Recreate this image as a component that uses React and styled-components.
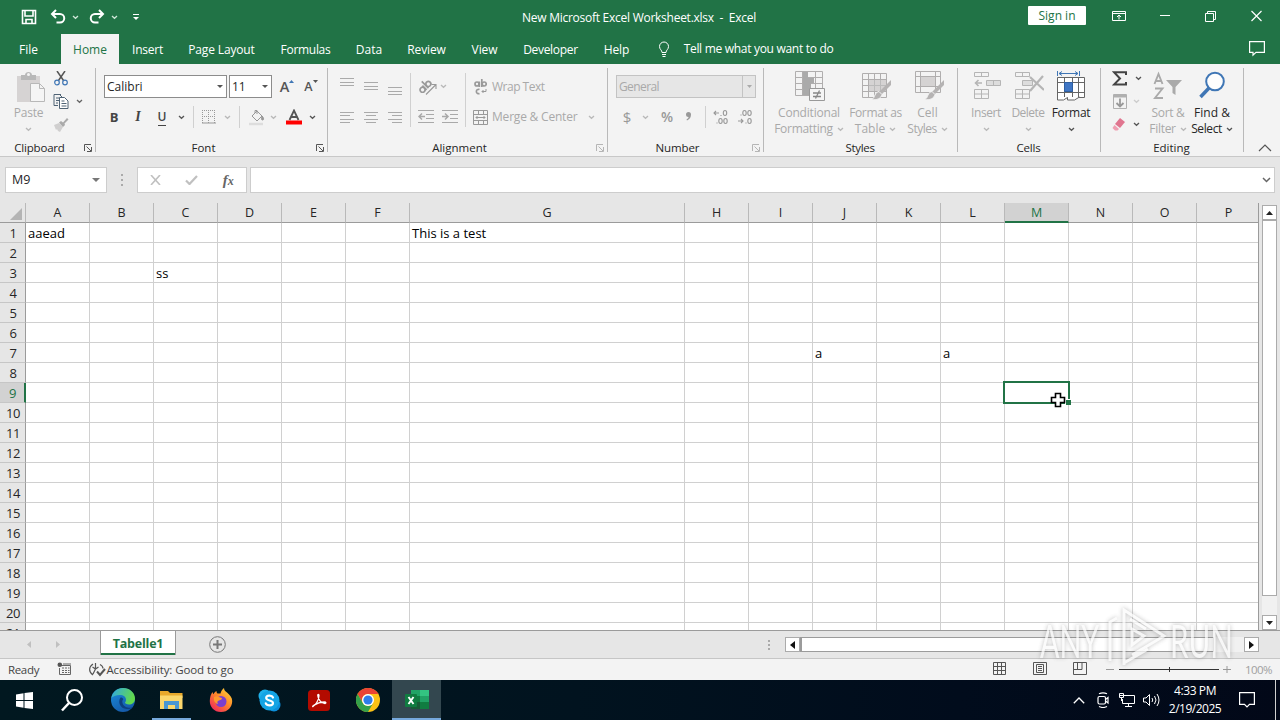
import React from 'react';
import styled, { createGlobalStyle } from 'styled-components';

const GlobalStyle = createGlobalStyle`
  * { box-sizing: border-box; }
  body { margin: 0; overflow: hidden; font-family: "Open Sans", "Noto Sans", sans-serif; font-size: 12px; color: #262626; }
  svg { display: block; flex: none; }
`;

const Screen = styled.div`
  width: 1280px; height: 720px; display: flex; flex-direction: column; position: relative; overflow: hidden; background: #e6e6e6;
`;
const Text = styled.span`
  font-size: ${(p) => p.$size || 12}px;
  letter-spacing: ${(p) => p.$ls || 0}px;
  color: ${(p) => p.$color || 'inherit'};
  font-weight: ${(p) => p.$weight || 400};
  line-height: 16px;
  white-space: pre;
`;
const Space = styled.div`flex: none; width: ${(p) => p.$w || 0}px;`;
const Slot = styled.div`
  flex: none; width: ${(p) => p.$w}px; height: ${(p) => (p.$h ? p.$h + 'px' : '100%')};
  display: flex; align-items: center; justify-content: center;
`;

/* title bar and tabs */
const Header = styled.header`height: 64px; flex: none; background: #217346; color: #fff; display: flex; flex-direction: column;`;
const TitleBar = styled.div`height: 34px; display: flex; align-items: center; padding-left: 17px;`;
const QuickAccess = styled.div`width: 505px; height: 34px; display: flex; align-items: center;`;
const Title = styled.div`width: 506px; height: 34px; display: flex; align-items: center; padding-top: 1px;`;
const SignIn = styled.div`width: 58px; height: 19px; margin-top: -3px; background: #fff; border-radius: 1px; color: #217346; display: flex; align-items: center; justify-content: center;`;
const TabRow = styled.nav`height: 30px; display: flex; align-items: center;`;
const Tab = styled.div`
  height: 30px; width: ${(p) => p.$w}px; padding-top: 1px; display: flex; align-items: center; justify-content: center;
  background: ${(p) => (p.$active ? '#f3f3f3' : 'transparent')}; color: ${(p) => (p.$active ? '#217346' : '#fff')};
`;

/* ribbon */
const Ribbon = styled.section`height: 93px; flex: none; background: #f3f3f3; border-bottom: 1px solid #c8c8c8; display: flex;`;
const Group = styled.div`width: ${(p) => p.$w}px; height: 92px; display: flex; flex-direction: column; flex: none;`;
const GroupBody = styled.div`height: 74px; display: flex; padding-left: ${(p) => p.$pl || 0}px;`;
const GroupFoot = styled.div`height: 18px; padding-top: 2px; display: flex; align-items: center; color: #262626;`;
const GroupName = styled.div`flex: 1; height: 16px; display: flex; justify-content: center;`;
const Divider = styled.div`width: 1px; height: 84px; margin-top: 4px; flex: none; background: #b9b9b9;`;
const Rule = styled.div`flex: none; width: 1px; height: ${(p) => p.$h || 22}px; background: #d0d0d0;`;
const Stack = styled.div`display: flex; flex-direction: column; flex: none; padding-top: ${(p) => p.$pt || 0}px; width: ${(p) => (p.$w ? p.$w + 'px' : 'auto')};`;
const Row = styled.div`display: flex; align-items: center; height: ${(p) => p.$h}px; padding-left: ${(p) => p.$pl || 0}px;`;
const BigButton = styled.div`
  width: ${(p) => p.$w}px; flex: none; display: flex; flex-direction: column; align-items: center; color: ${(p) => (p.$on ? '#262626' : '#a9a9a9')};
`;
const BigIcon = styled.div`height: 41px; padding: 7px 0 0 ${(p) => p.$pl || 0}px;`;
const BigLine = styled.div`height: 16px; display: flex; align-items: center; gap: 4px; white-space: nowrap;`;
const Combo = styled.div`
  width: ${(p) => p.$w}px; height: 23px; flex: none; display: flex; align-items: center; justify-content: space-between; padding: 0 3px 0 2px;
  border: 1px solid ${(p) => (p.$off ? '#c3c3c3' : '#8c8c8c')}; background: ${(p) => (p.$off ? '#e6e6e6' : '#fff')}; color: ${(p) => (p.$off ? '#a9a9a9' : '#262626')};
`;
const ComboArrow = styled.div`height: 21px; width: 13px; margin-right: -3px; border-left: 1px solid #c3c3c3; display: flex; align-items: center; justify-content: center;`;
const Glyph = styled.span`
  font-size: ${(p) => p.$size || 14}px; font-weight: ${(p) => p.$weight || 700}; font-style: ${(p) => (p.$italic ? 'italic' : 'normal')};
  font-family: ${(p) => (p.$serif ? '"Liberation Serif", serif' : '"Open Sans", sans-serif')};
  color: ${(p) => p.$color || '#444'}; line-height: 16px; border-bottom: ${(p) => (p.$under ? '1px solid #444' : 'none')};
`;

/* formula bar */
const FormulaBar = styled.section`height: 46px; flex: none; background: #e6e6e6; display: flex; padding: 10px 5px 0 5px;`;
const Field = styled.div`
  height: 26px; width: ${(p) => p.$w}px; flex: none; background: #fff; border: 1px solid #cdcdcd; display: flex; align-items: center;
  justify-content: ${(p) => p.$justify || 'space-between'}; padding: 0 ${(p) => p.$pr ?? 6}px 0 ${(p) => p.$pl ?? 6}px;
`;

/* sheet */
const SheetArea = styled.section`height: 427px; flex: none; display: flex; background: #e6e6e6;`;
const Sheet = styled.div`width: 1259px; height: 427px; overflow: hidden; position: relative; border-right: 1px solid #9b9b9b; flex: none;`;
const SheetRow = styled.div`
  display: grid; grid-template-columns: 26px repeat(6, 64px) 275px repeat(9, 64px); height: 20px;
`;
const HeadCell = styled.div`
  height: 20px; padding-top: ${(p) => (p.$on ? 2 : 1)}px; display: flex; align-items: center; justify-content: center; font-size: 12.5px; line-height: 16px;
  color: ${(p) => (p.$on ? '#217346' : '#262626')}; background: ${(p) => (p.$on ? '#d2d2d2' : '#e6e6e6')};
  border-right: 1px solid #b9b9b9; border-bottom: ${(p) => (p.$on ? '2px solid #217346' : '1px solid #9b9b9b')};
`;
const Corner = styled.div`height: 20px; border-right: 1px solid #b9b9b9; border-bottom: 1px solid #9b9b9b; display: flex; justify-content: flex-end; padding: 5px 3px 0 0;`;
const RowHead = styled.div`
  height: 20px; padding: 0 0 0 1px; display: flex; align-items: center; justify-content: center; font-size: 13px; letter-spacing: -0.4px;
  color: ${(p) => (p.$on ? '#217346' : '#262626')}; background: ${(p) => (p.$on ? '#d2d2d2' : '#e6e6e6')};
  border-bottom: 1px solid #c6c6c6; border-right: ${(p) => (p.$on ? '2px solid #217346' : '1px solid #9b9b9b')};
`;
const Cell = styled.div`
  height: 20px; background: #fff; border-right: 1px solid #d0d0d0; border-bottom: 1px solid #d0d0d0; padding: 2px 0 0 2px; color: #000; font-size: 13px; line-height: 16px; white-space: nowrap;
`;
const Selection = styled.div`position: absolute; left: 1003px; top: 178px; width: 67px; height: 23px; border: 2px solid #217346;`;
const FillHandle = styled.div`position: absolute; right: -3px; bottom: -3px; width: 6px; height: 6px; background: #217346; border: 1px solid #fff; border-right: 0; border-bottom: 0;`;
const Pointer = styled.svg`position: absolute; left: 1050px; top: 392px;`;

const VScroll = styled.div`width: 15px; margin: 2px 0 0 3px; display: flex; flex-direction: column;`;
const ScrollButton = styled.div`width: 15px; height: 15px; flex: none; background: #fff; border: 1px solid #ababab; display: flex; align-items: center; justify-content: center;`;
const VThumb = styled.div`width: 15px; height: 376px; background: #fff; border: 1px solid #ababab;`;
const VTrack = styled.div`flex: 1; background: #f1f1f1;`;

/* sheet tabs */
const SheetBar = styled.section`height: 29px; flex: none; border-top: 1px solid #9b9b9b; border-bottom: 1px solid #c6c6c6; display: flex; align-items: flex-start;`;
const SheetTab = styled.div`
  width: 76px; height: 24px; background: #fff; color: #217346; border: solid #9b9b9b; border-width: 0 1px; box-shadow: inset 0 -2px #217346;
  display: flex; align-items: center; justify-content: center; padding-top: 1px;
`;
const HScroll = styled.div`width: 474px; height: 15px; margin-top: 6px; display: flex; background: #f1f1f1;`;
const HThumb = styled.div`width: 414px; height: 15px; background: #fff; border: 1px solid #9b9b9b; border-left-width: 2px;`;

const StatusBar = styled.footer`height: 21px; flex: none; background: #f3f3f3; display: flex; align-items: center; color: #444; padding-left: 8px;`;

/* taskbar */
const Taskbar = styled.footer`height: 40px; flex: none; background: linear-gradient(90deg, #011820 0, #01131f 45%, #010c1c 75%, #020818); display: flex;`;
const Task = styled.div`
  width: 49px; height: 40px; display: flex; align-items: center; justify-content: center; position: relative;
  background: ${(p) => (p.$active ? '#33474f' : 'transparent')};
`;
const Underline = styled.div`position: absolute; bottom: 0; left: ${(p) => p.$inset}px; right: ${(p) => p.$inset}px; height: 2px; background: #76a9dc;`;
const Clock = styled.div`width: 64px; color: #fff; display: flex; flex-direction: column; align-items: center; padding-top: 2px;`;
const ClockLine = styled.div`height: 18px; display: flex; align-items: center;`;

/* watermark */
const Watermark = styled.div`position: absolute; left: 1040px; top: 605px; width: 198px; height: 66px; display: flex; align-items: center; opacity: 0.75; filter: drop-shadow(0 0 2px rgba(80, 80, 80, 0.5));`;
const MarkText = styled.span`
  width: ${(p) => p.$w}px; font: 400 47px/60px Lato, sans-serif; color: #fafafa; white-space: nowrap; display: inline-block;
  transform: scaleX(${(p) => p.$sx}); transform-origin: 0 50%; padding-top: 3px;
`;

const Ic = ({ w = 16, h = 16, children, c = '#b0b0b0', sw = 1, fill = 'none' }) => (
  <svg width={w} height={h} viewBox={`0 0 ${w} ${h}`} fill={fill} stroke={c} strokeWidth={sw}>{children}</svg>
);
const Chev = ({ c = '#b9b9b9' }) => <Ic w={7} h={5} c={c} sw={1.3}><path d="M1 1l2.5 2.3L6 1" /></Ic>;
const Tri = ({ c = '#555', w = 7, h = 4 }) => <svg width={w} height={h} viewBox="0 0 7 4" preserveAspectRatio="none"><path d="M0 0h7L3.5 4z" fill={c} /></svg>;
const Launcher = ({ c = '#555' }) => (
  <Slot $w={14} $h={16}><Ic w={8} h={8} c={c}><path d="M.5 7V.5H7M2.5 2.5l4.5 4.5M7.5 3v4.5H3" /></Ic></Slot>
);
const Foot = ({ name, ls, launcher, c }) => (
  <GroupFoot>
    <GroupName><Text $ls={ls} $size={11.5}>{name}</Text></GroupName>
    {launcher ? <><Space $w={2} /><Launcher c={c} /></> : <Space $w={1} />}
  </GroupFoot>
);

const TABS = [
  ['File', 57, 0], ['Home', 58, 0, true], ['Insert', 57, -0.25], ['Page Layout', 91, -0.15], ['Formulas', 77, -0.3],
  ['Data', 50, 0], ['Review', 65, -0.15], ['View', 51, -0.1], ['Developer', 81, -0.3], ['Help', 51, -0.1],
];

function WindowHeader() {
  return (
    <Header>
      <TitleBar>
        <QuickAccess>
          <Slot $w={24}><Ic w={16} h={16} c="#fff" sw={1.6}><path d="M1.5 1.5h13v13h-13zM4 1.5V7h8V1.5M5 14.500V10.500h6v4" /></Ic></Slot>
          <Slot $w={33}><Ic w={16} h={16} c="#fff" sw={2}><path d="M6 1L2 5l4 4M2.500 5H10a3.700 3.700 0 0 1 0 8.500H6.500" /></Ic></Slot>
          <Slot $w={3}><Chev c="#cfe6d8" /></Slot>
          <Space $w={3} />
          <Slot $w={34}><Ic w={16} h={16} c="#fff" sw={2}><path d="M10 1l4 4-4 4M13.500 5H6a3.700 3.700 0 0 0 0 8.500h3.500" /></Ic></Slot>
          <Slot $w={0}><Chev c="#cfe6d8" /></Slot>
          <Slot $w={43}><Ic w={8} h={8} c="#fff"><path d="M1 1.500h6" /><path d="M1 4h6L4 7z" fill="#fff" stroke="none" /></Ic></Slot>
        </QuickAccess>
        <Title><Text $ls={-0.26}>New Microsoft Excel Worksheet.xlsx  -  Excel</Text></Title>
        <SignIn><Text>Sign in</Text></SignIn>
        <Space $w={10} />
        <Slot $w={46}><Ic w={14} h={14} c="#fff"><path d="M.5 1.500h13v9H.5zM.5 3.500h13M7 9.500V5M5 7l2-2 2 2" /></Ic></Slot>
        <Slot $w={46}><Ic w={10} h={10} c="#fff"><path d="M0 3.500h10" /></Ic></Slot>
        <Slot $w={45}><Ic w={11} h={14} c="#fff"><path d="M.5 3.500h8v8h-8zM2.500 3.500v-2h8v8h-2" /></Ic></Slot>
        <Slot $w={47}><Ic w={11} h={14} c="#fff" sw={1.2}><path d="M.5 1l10 10M10.500 1l-10 10" /></Ic></Slot>
      </TitleBar>
      <TabRow>
        {TABS.map(([n, w, ls, on], i) => (
          <React.Fragment key={n}>{i === 1 && <Space $w={4} />}<Tab $w={w} $active={on}><Text $ls={ls}>{n}</Text></Tab></React.Fragment>
        ))}
        <Space $w={10} />
        <Slot $w={24}><Ic w={12} h={16} c="#fff"><path d="M4 11.500C4 9 1.500 8.500 1.500 5.500a4.500 4.500 0 0 1 9 0C10.500 8.500 8 9 8 11.500zM4 13.500h4M4.500 15.500h3" /></Ic></Slot>
        <Slot $w={165}><Text $ls={-0.3}>Tell me what you want to do</Text></Slot>
        <Space $w={408} />
        <Stack $pt={0}><Ic w={16} h={17} c="#fff" sw={1.2}><path d="M.6.6h14.800v10.800H7L4 14.200V11.400H.6z" /></Ic></Stack>
      </TabRow>
    </Header>
  );
}

function ClipboardGroup() {
  return (
    <Group $w={95}>
      <GroupBody>
        <BigButton $w={57}>
          <BigIcon $pl={5}>
            <Ic w={30} h={32} c="#b8b8b8"><path d="M1 5h23v26H1z" fill="#d6d3d3" stroke="none" /><path d="M5 4h4c0-4 7-4 7 0h4v5H5z" fill="#b8b8b8" stroke="none" /><circle cx="12.500" cy="3.500" r="1.500" fill="#f3f3f3" stroke="none" /><path d="M14.500 12.500h9l5 5v13h-14zM23.500 12.500v5h5" fill="#f5f5f5" /></Ic>
          </BigIcon>
          <BigLine><Text $ls={-0.2}>Paste</Text></BigLine>
          <BigLine><Chev /></BigLine>
        </BigButton>
        <Stack $pt={3} $w={36}>
          <Row $h={23}>
            <Slot $w={8}><Ic w={16} h={16} c="#555" sw={1.500}><path d="M4 0l6.500 9.500M12 0L5.500 9.500" /><circle cx="4" cy="11.500" r="2.300" stroke="#3f76b5" strokeWidth="1.200" /><circle cx="12" cy="11.500" r="2.300" stroke="#3f76b5" strokeWidth="1.200" /></Ic></Slot>
          </Row>
          <Row $h={23}><Slot $w={8}><Ic w={16} h={15} c="#4f6375"><path d="M5 11.500H1V.5h7M1 .5h5.500L9 3M3 4h3M3 6.500h3M3 9h2" /><path d="M6.500 3.500h5l3.500 3.500v7.500H6.500zM8.500 7h3M8.500 9.500h5M8.500 12h5" fill="#fff" /></Ic></Slot><Slot $w={28}><Chev c="#666" /></Slot></Row>
          <Row $h={22}><Slot $w={8}><Ic w={16} h={15} c="none"><path d="M1 8l5-2 4 4-3 5-2-1-1-2-1 1z" fill="#d0cfcf" /><path d="M6 5.500L8 4l2 1.500L14 1l1.500 1.500-4 4L12 8l-2 2z" fill="#aaa" /></Ic></Slot></Row>
        </Stack>
      </GroupBody>
      <Foot name="Clipboard" launcher ls={-0.2} />
    </Group>
  );
}

function FontGroup() {
  return (
    <Group $w={231}>
      <GroupBody $pl={6}>
        <Stack $pt={8}>
          <Row $h={29} $pl={2}>
            <Combo $w={123}><Text>Calibri</Text><Tri w={6} h={3} /></Combo>
            <Space $w={2} />
            <Combo $w={43}><Text>11</Text><Tri w={6} h={3} /></Combo>
            <Space $w={6} />
            <Slot $w={18}><Glyph $size={14.5} $weight={600} $color="#555">A</Glyph><Ic w={5} h={14} c="none"><path d="M0 3l2.500-3L5 3z" fill="#3f76b5" /></Ic></Slot>
            <Space $w={7} />
            <Slot $w={16}><Glyph $size={12.5} $weight={600} $color="#555">A</Glyph><Ic w={5} h={14} c="none"><path d="M0 0l2.500 3L5 0z" fill="#555" /></Ic></Slot>
          </Row>
          <Row $h={32}>
            <Slot $w={24}><Glyph $size={13}>B</Glyph></Slot>
            <Slot $w={24}><Glyph $size={14} $italic $serif>I</Glyph></Slot>
            <Slot $w={24}><Glyph $size={12} $weight={600} $under>U</Glyph></Slot>
            <Slot $w={14}><Chev c="#555" /></Slot>
            <Slot $w={10}><Rule /></Slot>
            <Slot $w={22}><Ic w={14} h={14} c="#999"><path d="M.5 0v13M6.500 0v13M12.500 0v13M0 .5h13M0 6.500h13" strokeDasharray="1 1" /><path d="M0 13h14" /></Ic></Slot>
            <Slot $w={14}><Chev /></Slot>
            <Slot $w={10}><Rule /></Slot>
            <Slot $w={24}><Ic w={17} h={17} c="#999"><path d="M4 7l5-5 5 5-5 5zM7 4V1.500h2V5" /><path d="M14 7c2 2 2 4 .5 4s-1-2-.5-4z" fill="#999" /><path d="M1 15h14" strokeWidth="2.500" stroke="#ddd" /></Ic></Slot>
            <Slot $w={10}><Chev /></Slot>
            <Slot $w={32}><Ic w={16} h={16} c="#555" sw={1.800}><path d="M3.500 11L8 1.500 12.500 11M5 8h6" /><path d="M0 13.500h16" stroke="#f00" strokeWidth="4" /></Ic></Slot>
            <Slot $w={4}><Chev c="#555" /></Slot>
          </Row>
        </Stack>
      </GroupBody>
      <Foot name="Font" launcher />
    </Group>
  );
}

const Lines = ({ rows, align }) => (
  <Ic w={14} h={18} c="#aaa">
    {rows.map(([y, l]) => {
      const x = align === 'r' ? 14 - l : align === 'c' ? (14 - l) / 2 : 0;
      return <path key={y} d={`M${x} ${y}h${l}`} />;
    })}
  </Ic>
);

function AlignmentGroup() {
  const g = '#a9a9a9';
  return (
    <Group $w={279}>
      <GroupBody $pl={7}>
        <Stack $pt={8}>
          <Row $h={29}>
            <Slot $w={24}><Lines rows={[[0.5, 14], [4.500, 14], [7.500, 14]]} /></Slot>
            <Slot $w={24}><Lines rows={[[4.500, 14], [8.500, 14], [11.500, 14]]} /></Slot>
            <Slot $w={24}><Lines rows={[[9.500, 14], [13.500, 14], [16.500, 14]]} /></Slot>
          </Row>
          <Row $h={32}>
            <Slot $w={24}><Lines align="l" rows={[[4.500, 14], [7.500, 10], [11.500, 14], [14.500, 10]]} /></Slot>
            <Slot $w={24}><Lines align="c" rows={[[4.500, 14], [7.500, 10], [11.500, 14], [14.500, 10]]} /></Slot>
            <Slot $w={24}><Lines align="r" rows={[[4.500, 14], [7.500, 10], [11.500, 14], [14.500, 10]]} /></Slot>
          </Row>
        </Stack>
        <Stack $pt={9} $w={7}><Row $h={54} $pl={3}><Rule $h={54} /></Row></Stack>
        <Stack $pt={8}>
          <Row $h={29}>
            <Slot $w={28}><Ic w={18} h={18} c="#999" sw={1.700}><g transform="rotate(-45 7 9)"><circle cx="2.600" cy="8.500" r="2.500" /><path d="M5.400 5.500v6M8 2v9.500" /><circle cx="10.800" cy="8.500" r="2.500" /></g><path d="M7 16.500L16.500 7M12.500 6.500H17V11" strokeWidth="1.100" /></Ic></Slot>
            <Slot $w={2}><Chev /></Slot>
          </Row>
          <Row $h={32}>
            <Slot $w={24}><Ic w={16} h={14} c={g}><path d="M0 .5h16M8 4.500h8M8 8.500h8M0 12.500h16" /><path d="M7 6.500H1M4 3.500l-3 3 3 3" strokeWidth="1.500" /></Ic></Slot>
            <Slot $w={24}><Ic w={16} h={14} c={g}><path d="M0 .5h16M8 4.500h8M8 8.500h8M0 12.500h16" /><path d="M0 6.500h6M3 3.500l3 3-3 3" strokeWidth="1.500" /></Ic></Slot>
          </Row>
        </Stack>
        <Stack $pt={9} $w={11}><Row $h={54} $pl={3}><Rule $h={54} /></Row></Stack>
        <Stack $pt={8}>
          <Row $h={29}>
            <Slot $w={14}><Ic w={13} h={16} c="#999" sw={1.700}><circle cx="3" cy="5" r="2" /><path d="M5.300 2.500V8M7.800 0v8M5.500 10.500a2.200 2.200 0 1 0 0 4" /><circle cx="10.200" cy="5" r="2" /><path d="M12 10v2.500H8M9.500 11L8 12.500 9.500 14" strokeWidth="1" /></Ic></Slot>
            <Space $w={5} />
            <Text $color={g} $ls={-0.5}>Wrap Text</Text>
          </Row>
          <Row $h={32}>
            <Slot $w={14}><Ic w={15} h={15} c="#999"><path d="M.5.5h14v14H.5zM.5 4.500h14M.5 10.500h14M5.500.5v4M10.500.5v4M5.500 10.500v4M10.500 10.500v4M3 7.500h9M4.500 6L3 7.500 4.500 9M10.500 6L12 7.500 10.500 9" /></Ic></Slot>
            <Space $w={5} />
            <Text $color={g} $ls={-0.2}>Merge & Center</Text>
            <Slot $w={28}><Chev /></Slot>
          </Row>
        </Stack>
      </GroupBody>
      <Foot name="Alignment" launcher c="#b5b5b5" />
    </Group>
  );
}

const Decimal = ({ inc }) => (
  <Ic w={16} h={16} c="#999" sw={1.100}>
    {inc
      ? <><path d="M1 4h5M3 2L1 4l2 2M8 6v1" /><ellipse cx="12" cy="4" rx="1.700" ry="2.500" /><path d="M4 13.500v1" /><ellipse cx="7.500" cy="12" rx="1.700" ry="2.500" /><ellipse cx="12.500" cy="12" rx="1.700" ry="2.500" /></>
      : <><path d="M4 5.500v1" /><ellipse cx="7.500" cy="4" rx="1.700" ry="2.500" /><ellipse cx="12.500" cy="4" rx="1.700" ry="2.500" /><path d="M1 12h5M4 10l2 2-2 2M9 13.500v1" /><ellipse cx="12.500" cy="12" rx="1.700" ry="2.500" /></>}
  </Ic>
);

function NumberGroup() {
  return (
    <Group $w={155}>
      <GroupBody $pl={8}>
        <Stack $pt={8}>
          <Row $h={29}><Combo $w={140} $off><Text $ls={-0.6}>General</Text><ComboArrow><Tri w={5} h={3} c="#aaa" /></ComboArrow></Combo></Row>
          <Row $h={32}>
            <Slot $w={22}><Glyph $size={15} $weight={400} $color="#999">$</Glyph></Slot>
            <Slot $w={14}><Chev /></Slot>
            <Slot $w={30}><Glyph $size={14} $weight={600} $color="#999">%</Glyph></Slot>
            <Slot $w={14}><Ic w={6} h={10} c="none"><path d="M0 2.500a2.500 2.500 0 0 1 5 0C5 5 4 7 1 8.500L.5 7.500C2 6.500 2.500 6 2.500 5A2.500 2.500 0 0 1 0 2.500z" fill="#999" /></Ic></Slot>
            <Slot $w={18}><Rule /></Slot>
            <Slot $w={14}><Decimal inc /></Slot>
            <Slot $w={34}><Decimal /></Slot>
          </Row>
        </Stack>
      </GroupBody>
      <Foot name="Number" launcher c="#b5b5b5" ls={-0.1} />
    </Group>
  );
}

const Brush = () => (
  <g stroke="none"><path d="M29 9L17 21l2.500 2.500L29 14z" fill="#b5b3b3" /><path d="M17 20.500l3 3c-1 4-5 6-11 5 3-1 3-2 4-4.500s2.500-3 4-3.500z" fill="#b5b3b3" stroke="#f3f3f3" /></g>
);

function StylesGroup() {
  const g = '#b0aeae';
  return (
    <Group $w={193}>
      <GroupBody $pl={11}>
        <BigButton $w={68}>
          <BigIcon $pl={2}><Ic w={30} h={31} c={g}><path d="M.5.5h27v24H.5zM.5 6.500h27M.5 12.500h27M.5 18.500h27M7.500.5v24M20.500.5v24" /><path d="M8 1h5v6h6v5h-3v6h-2v6H8z" fill="#aaa" stroke="none" /><path d="M14.500 17.500h15v12h-15z" fill="#f5f5f5" stroke="#999" /><path d="M18 22h8M18 25.500h8M24.500 19.500l-4 8" stroke="#888" strokeWidth="1.300" /></Ic></BigIcon>
          <BigLine><Text $ls={-0.2}>Conditional</Text></BigLine>
          <BigLine><Text $ls={-0.3}>Formatting</Text><Chev /></BigLine>
        </BigButton>
        <BigButton $w={65}>
          <BigIcon $pl={3}><Ic w={30} h={31} c={g}><path d="M.5 2.500h24v24H.5zM.5 8.500h24M.5 14.500h24M.5 20.500h24M6.500 2.500v24M12.500 2.500v24M18.500 2.500v24" /><path d="M7 9h17v11H7z" fill="#d5d3d3" stroke="none" /><path d="M12.500 9v11M18.500 9v11M7 14.500h17" stroke="#bbb" /><Brush /></Ic></BigIcon>
          <BigLine><Text $ls={-0.35}>Format as</Text></BigLine>
          <BigLine><Text>Table</Text><Chev /></BigLine>
        </BigButton>
        <BigButton $w={39}>
          <BigIcon $pl={4}><Ic w={30} h={31} c={g}><path d="M.5.5h25v21H.5zM.5 5.500h25M.5 15.500h25M5.500.5v21M20.500.5v21" /><path d="M6 6h14v9H6z" fill="#d5d3d3" stroke="none" /><Brush /></Ic></BigIcon>
          <BigLine><Text>Cell</Text></BigLine>
          <BigLine><Text $ls={-0.5}>Styles</Text><Chev /></BigLine>
        </BigButton>
      </GroupBody>
      <Foot name="Styles" ls={-0.3} />
    </Group>
  );
}

function CellsGroup() {
  return (
    <Group $w={142}>
      <GroupBody $pl={7}>
        <BigButton $w={42}>
          <BigIcon $pl={2}><Ic w={28} h={30} c="#b5b5b5"><path d="M1.500 1.500h14v4h-14zM8.500 1.500v4M1.500 18.500h14v9h-14zM8.500 18.500v9M1.500 23h14" /><path d="M13.500 9.500h14v5h-14zM20.500 9.500v5" fill="#ddd" /><path d="M9 12H2.500M5.500 9l-3 3 3 3" strokeWidth="1.600" /></Ic></BigIcon>
          <BigLine><Text $ls={-0.4}>Insert</Text></BigLine><BigLine><Chev /></BigLine>
        </BigButton>
        <BigButton $w={42}>
          <BigIcon $pl={2}><Ic w={30} h={30} c="#b5b5b5"><path d="M1.500 1.500h14v4h-14zM8.500 1.500v4M1.500 18.500h14v9h-14zM8.500 18.500v9M1.500 23h14" /><path d="M8.500 9.500h10v5h-10z" fill="#ddd" /><path d="M16 6l14 13M29 5L16 20" strokeWidth="2.200" /></Ic></BigIcon>
          <BigLine><Text $ls={-0.5}>Delete</Text></BigLine><BigLine><Chev /></BigLine>
        </BigButton>
        <BigButton $w={44} $on>
          <BigIcon><Ic w={30} h={31} c="#666"><path d="M1.500 6.500h27v20h-27zM1.500 11.500h27M1.500 21.500h27M8.500 6.500v20M16.500 6.500v20M22.500 6.500v20" fill="#fff" /><path d="M8.500 11.500h8v9h-8z" fill="#3f76c5" stroke="#2f5f9f" /><path d="M1.500 26v3h6l4-2.500v2.500h7l5-3" fill="#fff" /><path d="M1.500 0v5M23.500 0v5M3 2.500h19M6 .5l-3 2 3 2M19 .5l3 2-3 2" stroke="#3f76b5" /></Ic></BigIcon>
          <BigLine><Text $ls={-0.3}>Format</Text></BigLine><BigLine><Chev c="#555" /></BigLine>
        </BigButton>
      </GroupBody>
      <Foot name="Cells" ls={-0.2} />
    </Group>
  );
}

function EditingGroup() {
  return (
    <Group $w={142}>
      <GroupBody $pl={9}>
        <Stack $pt={2} $w={37}>
          <Row $h={24}><Slot $w={20}><Ic w={16} h={15} c="#444" sw={2}><path d="M14 4V1.200H2l6 6.300L2 13.600h12V11" /></Ic></Slot><Slot $w={16}><Chev c="#555" /></Slot></Row>
          <Row $h={23}><Slot $w={20}><Ic w={14} h={15} c="#b0b0b0"><path d="M.5.5h13v14H.5z" /><path d="M1 2h12" strokeWidth="3" /><path d="M7 4.500v8M3.500 9L7 12.500 10.500 9" strokeWidth="1.800" stroke="#999" /></Ic></Slot><Slot $w={12}><Chev c="#ccc" /></Slot></Row>
          <Row $h={23}><Slot $w={18}><Ic w={14} h={13} c="none"><path d="M8 0l5 4-5 6-5-4z" fill="#e0758f" /><path d="M2.500 7l4.500 4-1.500 1.500H3L.5 10z" fill="#ef9fb2" /></Ic></Slot><Slot $w={16}><Chev c="#555" /></Slot></Row>
        </Stack>
        <BigButton $w={42}>
          <BigIcon><Ic w={30} h={30} c="#aaa" sw={1.900}><path d="M1.500 13L5.500 3l4 10M3 10h5M2 17.500h7.500L2 27h8" /><path d="M13 9h16l-6.500 7v8l-3-2v-6z" stroke="none" fill="#aaa" /></Ic></BigIcon>
          <BigLine><Text $ls={-0.3}>Sort &</Text></BigLine><BigLine><Text $ls={-0.3}>Filter</Text><Chev /></BigLine>
        </BigButton>
        <BigButton $w={46} $on>
          <BigIcon><Ic w={30} h={30} c="#3f76b5" sw={2}><path d="M12 17L3.500 26" strokeWidth="3.500" /><circle cx="18" cy="10.500" r="8.800" fill="#fdfdfd" /></Ic></BigIcon>
          <BigLine><Text>Find &</Text></BigLine><BigLine><Text $ls={-0.4}>Select</Text><Chev c="#555" /></BigLine>
        </BigButton>
      </GroupBody>
      <Foot name="Editing" />
    </Group>
  );
}

const COLS = 'ABCDEFGHIJKLMNOP'.split('');
const VALUES = { A1: 'aaead', G1: 'This is a test', C3: 'ss', J7: 'a', L7: 'a' };

function Worksheet() {
  return (
    <SheetArea>
      <Sheet>
        <SheetRow>
          <Corner><svg width="12" height="12"><path d="M12 0v12H0z" fill="#b4b4b4" /></svg></Corner>
          {COLS.map((c) => <HeadCell key={c} $on={c === 'M'}>{c}</HeadCell>)}
        </SheetRow>
        {Array.from({ length: 21 }, (_, i) => i + 1).map((r) => (
          <SheetRow key={r}>
            <RowHead $on={r === 9}>{r}</RowHead>
            {COLS.map((c) => <Cell key={c}>{VALUES[c + r]}</Cell>)}
          </SheetRow>
        ))}
        <Selection><FillHandle /></Selection>
      </Sheet>
      <VScroll>
        <ScrollButton><svg width="7" height="4"><path d="M0 4h7L3.500 0z" fill="#222" /></svg></ScrollButton>
        <VThumb /><VTrack />
        <ScrollButton><Tri c="#222" /></ScrollButton>
      </VScroll>
    </SheetArea>
  );
}

function SheetTabs() {
  return (
    <SheetBar>
      <Slot $w={58}><svg width="4" height="7"><path d="M4 0v7L0 3.500z" fill="#c0c0c0" /></svg></Slot>
      <Slot $w={0}><svg width="4" height="7"><path d="M0 0v7l4-3.500z" fill="#c0c0c0" /></svg></Slot>
      <Space $w={42} />
      <SheetTab><Text $size={12.500} $weight={700} $ls={-0.2}>Tabelle1</Text></SheetTab>
      <Slot $w={82}><Ic w={17} h={17} c="#777"><circle cx="8.500" cy="8.500" r="7.800" /><path d="M8.500 4v9M4 8.500h9" strokeWidth="2" /></Ic></Slot>
      <Space $w={510} />
      <Slot $w={2}><svg width="2" height="10" fill="#aaa"><path d="M0 0h2v2H0zM0 4h2v2H0zM0 8h2v2H0z" /></svg></Slot>
      <Space $w={15} />
      <HScroll>
        <ScrollButton><svg width="5" height="8"><path d="M5 0v8L0 4z" fill="#111" /></svg></ScrollButton>
        <HThumb />
        <Space $w={30} />
        <ScrollButton><svg width="5" height="8"><path d="M0 0v8l5-4z" fill="#111" /></svg></ScrollButton>
      </HScroll>
    </SheetBar>
  );
}

function Status() {
  return (
    <StatusBar>
      <Slot $w={31}><Text $size={11.500} $ls={-0.3}>Ready</Text></Slot>
      <Space $w={18} />
      <Ic w={14} h={15} c="#666"><path d="M3 3.500h10.500v9H2.500V6M5 6h2M8 6h2M11 6h1.500M5 8.500h2M8 8.500h2M11 8.500h1.500M5 10.500h2M8 10.500h2M11 10.500h1.500M6 2h8" /><circle cx="2.800" cy="2.800" r="2.300" fill="#555" stroke="none" /></Ic>
      <Space $w={18} />
      <Ic w={17} h={15} c="#555" sw={1.200}><path d="M4 2C-.5 5-.5 10 4 13M6.500 1v5M3.500 5l3 2 3-2M6.500 7L4 12M11 2.500c2 1 3 2.500 3 4" /><path d="M8 9.500l3 3.500 5-6" strokeWidth="2" /></Ic>
      <Slot $w={128}><Text $size={11.500} $ls={-0.1}>Accessibility: Good to go</Text></Slot>
      <Space $w={759} />
      <Ic w={13} h={15} c="#555"><path d="M.5.5h12v12H.5zM.5 4.500h12M.5 8.500h12M4.500.5v12M8.500.5v12" /></Ic>
      <Space $w={27} />
      <Ic w={14} h={15} c="#555"><path d="M.5.5h13v12H.5zM3.500 2.500h7v8h-7zM5 4.500h4M5 6.500h4M5 8.500h4" /></Ic>
      <Space $w={26} />
      <Ic w={14} h={15} c="#555"><path d="M.5.5h13v12H.5zM4.500.5v7M.5 7.500h8.500V.5" /></Ic>
      <Space $w={19} />
      <Ic w={125} h={11} c="#999"><path d="M0 5.500h8M117 5.500h8M121 2v7" /><path d="M13 5.500h100M63.500 3v5" stroke="#333" /></Ic>
      <Slot $w={55}><Text $size={11.500} $ls={-0.5} $color="#a0a0a0">100%</Text></Slot>
    </StatusBar>
  );
}

function TaskbarRow() {
  return (
    <Taskbar>
      <Task><svg width="17" height="17" fill="#fff"><path d="M0 2.400l7.500-1.100v6.700H0zM8.500 1.100L17 0v8H8.500zM0 9h7.500v6.700L0 14.600zM8.500 9H17v8l-8.500-1.100z" /></svg></Task>
      <Task><Ic w={25} h={24} c="#fff" sw={2}><circle cx="13.500" cy="9.500" r="7.500" /><path d="M8 15l-7 7.500" strokeWidth="2.500" /></Ic></Task>
      <Task>
        <svg width="24" height="24" viewBox="0 0 24 24">
          <defs><linearGradient id="eg" x1="0" y1="0" x2="1" y2="0.3"><stop offset="0" stopColor="#2fa8e8" /><stop offset="1" stopColor="#62d84c" /></linearGradient><linearGradient id="eb" x1="0" y1="0" x2="0.6" y2="1"><stop offset="0" stopColor="#1a8fe0" /><stop offset="1" stopColor="#1559a8" /></linearGradient></defs>
          <circle cx="12" cy="12" r="12" fill="url(#eb)" />
          <path d="M.3 10C1.500 4 6 0 12 0c7 0 12 5 12 10.500 0 4-3 6-6 6-2.500 0-4-1-4-1.700 0-.6 1-1 1-3C15 9 12.500 7 9 7 5 7 1.500 8.500.3 10z" fill="url(#eg)" />
          <path d="M9.500 9.500C6.500 14 9 20.500 15.500 21c3 .2 5.500-.8 6.500-1.800-2 .8-9 1.300-10.500-4.200-.4-1.700 0-3 .8-3.800-.3-1-1.300-1.700-2.800-1.700z" fill="#0d3f80" />
        </svg>
      </Task>
      <Task>
        <svg width="23" height="20" viewBox="0 0 23 20"><path d="M0 1h8l2 2h12.500v5H0z" fill="#e8a92c" /><path d="M0 5.500h22.500V19H0z" fill="#fbd76c" /><path d="M4 11h15v8h-4v-4H8v4H4z" fill="#4a97d2" /></svg>
        <Underline $inset={5} />
      </Task>
      <Task>
        <svg width="24" height="24" viewBox="0 0 24 24">
          <defs><linearGradient id="ff" x1="1" y1="0" x2="0.200" y2="1"><stop offset="0" stopColor="#ffe23c" /><stop offset="0.500" stopColor="#ff8a2a" /><stop offset="1" stopColor="#f0265c" /></linearGradient></defs>
          <path d="M12 24C5 24 .8 19 .8 13c0-4 1.200-7 2.700-9 .2 1 .5 1.700 1 2.200C5 5 6.500 3.500 7.500 3c0 1 .3 2 1 2.500h3C12 3 13.500 1 15 0c0 2 1 3 3 4.500C21 7 23.200 9.500 23.200 13c0 6-4.200 11-11.200 11z" fill="url(#ff)" />
          <circle cx="12" cy="13.500" r="5.500" fill="#7a3fd0" /><path d="M5 9c2-1 4-1 6 .5l2 .5c0 1.500-1.500 2-3 2.500C8 13 8 15 9 16c-3-.5-4.500-3-4-7z" fill="#ff9a2c" />
        </svg>
      </Task>
      <Task><svg width="23" height="23" viewBox="0 0 23 23"><circle cx="7" cy="7" r="6.500" fill="#1fb0ea" /><circle cx="16" cy="16" r="6.500" fill="#0c8fdc" /><circle cx="11.500" cy="11.500" r="10" fill="#15a4e4" /><path d="M15 8.500C14 6 8.200 6 8.200 9c0 3 6.800 2 6.800 5 0 3.200-6.200 3-7.200.3" fill="none" stroke="#fff" strokeWidth="2.200" strokeLinecap="round" /></svg></Task>
      <Task><svg width="22" height="21" viewBox="0 0 22 21"><rect width="22" height="21" rx="3.500" fill="#b30b00" /><path d="M5 16.500c2-1 6-6 6-11 0-1.500-1.300-1.500-1.200 0C10 9 13 13.500 17 13.500c1.500-.3 1-1.500-.5-1.500-3 0-8 1.500-11 3.500-.9.700-1.100 1.500-.5 1z" fill="none" stroke="#fff" strokeWidth="1.300" /></svg></Task>
      <Task>
        <svg width="24" height="24" viewBox="0 0 24 24"><circle cx="12" cy="12" r="12" fill="#fbc116" /><path d="M1.600 6A12 12 0 0 1 22.400 6H12a6 6 0 0 0-5.200 9z" fill="#ea4335" /><path d="M1.600 6A12 12 0 0 0 12 24l5.200-9A6 6 0 0 1 6.800 15z" fill="#34a04a" /><circle cx="12" cy="12" r="6" fill="#fff" /><circle cx="12" cy="12" r="4.600" fill="#2f7de9" /></svg>
      </Task>
      <Task $active>
        <svg width="24" height="20" viewBox="0 0 24 20"><path d="M6 0h9v6H6z" fill="#21a366" /><path d="M15 0h9v6h-9z" fill="#33c481" /><path d="M6 6h9v6H6z" fill="#107c41" /><path d="M15 6h9v6h-9z" fill="#21a366" /><path d="M6 12h18v7H6z" fill="#185c37" /><path d="M15 12h9v7h-9z" fill="#107c41" /><rect y="4" width="12" height="13" rx="1" fill="#107c41" /><path d="M3.500 7l5 7M8.500 7l-5 7" stroke="#fff" strokeWidth="1.900" /></svg>
        <Underline $inset={0} />
      </Task>
      <Space $w={626} />
      <Slot $w={24}><Ic w={12} h={7} c="#fff" sw={1.300}><path d="M.8 6.200L6 1l5.200 5.200" /></Ic></Slot>
      <Slot $w={24}><Ic w={12} h={16} c="#fff" sw={1.200}><rect x="1" y="4.500" width="7.500" height="7.500" rx="1.500" /><path d="M8.500 7.500l2.500-2v5.500l-2.500-2M2 1.800q4-2 8 0M2 14.500q4 2 8 0" /></Ic></Slot>
      <Slot $w={24}><Ic w={16} h={14} c="#fff"><path d="M5 2.500h10.500v8H3.500V6M9.500 10.500v3M6 13.500h7M.5.500h4v4h-4zM1 2.500h3M2.500 5v3" /></Ic></Slot>
      <Slot $w={24}><Ic w={17} h={14} c="#fff"><path d="M.5 5v4h2.500l3.500 3.500v-11L3 5zM9 5q1.500 2 0 4M11.500 3q3 4 0 8M14 1q4 6 0 12" /></Ic></Slot>
      <Clock><ClockLine><Text $ls={-0.4}>4:33 PM</Text></ClockLine><ClockLine><Text $ls={-0.5}>2/19/2025</Text></ClockLine></Clock>
      <Slot $w={40}><Ic w={16} h={16} c="#fff" sw={1.200}><path d="M.6.600h14.800v11.800h-4.900L8 15l-2.500-2.600H.6z" /></Ic></Slot>
      <Space $w={8} />
      <Rule $h={40} />
    </Taskbar>
  );
}

export default function App() {
  return (
    <Screen>
      <GlobalStyle />
      <WindowHeader />
      <Ribbon>
        <ClipboardGroup /><Divider /><FontGroup /><Divider /><AlignmentGroup /><Divider /><NumberGroup /><Divider />
        <StylesGroup /><Divider /><CellsGroup /><Divider /><EditingGroup /><Divider />
        <Space $w={14} />
        <Stack $pt={80}><Ic w={14} h={8} c="#555" sw={1.200}><path d="M1 7l6-6 6 6" /></Ic></Stack>
      </Ribbon>
      <FormulaBar>
        <Field $w={102}><Text $size={12.5}>M9</Text><Tri w={8} h={4} c="#777" /></Field>
        <Slot $w={30} $h={26}><svg width="2" height="12" fill="#aaa"><path d="M0 0h2v2H0zM0 5h2v2H0zM0 10h2v2H0z" /></svg></Slot>
        <Field $w={110} $justify="space-around" $pl={0} $pr={0}>
          <Ic w={11} h={10} c="#c0c0c0" sw={1.600}><path d="M1 0l9 10M10 0L1 10" /></Ic>
          <Ic w={13} h={10} c="#c0c0c0" sw={2.200}><path d="M1 5.500L4.500 9 12 1" /></Ic>
          <Glyph $serif $italic $size={15} $color="#666">f<Glyph $serif $italic $size={12} $color="#666">x</Glyph></Glyph>
        </Field>
        <Space $w={3} />
        <Field $w={1025} $justify="flex-end" $pr={3}><Ic w={9} h={6} c="#666" sw={1.500}><path d="M1 1l3.500 3.500L8 1" /></Ic></Field>
      </FormulaBar>
      <Worksheet />
      <SheetTabs />
      <Status />
      <TaskbarRow />
      <Pointer width="16" height="17" viewBox="0 0 16 17"><path d="M5.500 1.500h5v4h4v5h-4v4h-5v-4h-4v-5h4z" fill="#fff" stroke="#000" strokeWidth="1.600" /></Pointer>
      <Watermark>
        <MarkText $sx={0.61} $w={64}>ANY</MarkText>
        <svg width="66" height="66" viewBox="0 0 66 66" fill="none" stroke="#fafafa" strokeWidth="3"><path d="M20 60V5l40 26-32 19M26 14l16 10M20 58l24-14M28 40V24l12 7z" /><path d="M6 56V17l7-4" /></svg>
        <MarkText $sx={0.63} $w={62}>RUN</MarkText>
      </Watermark>
    </Screen>
  );
}
